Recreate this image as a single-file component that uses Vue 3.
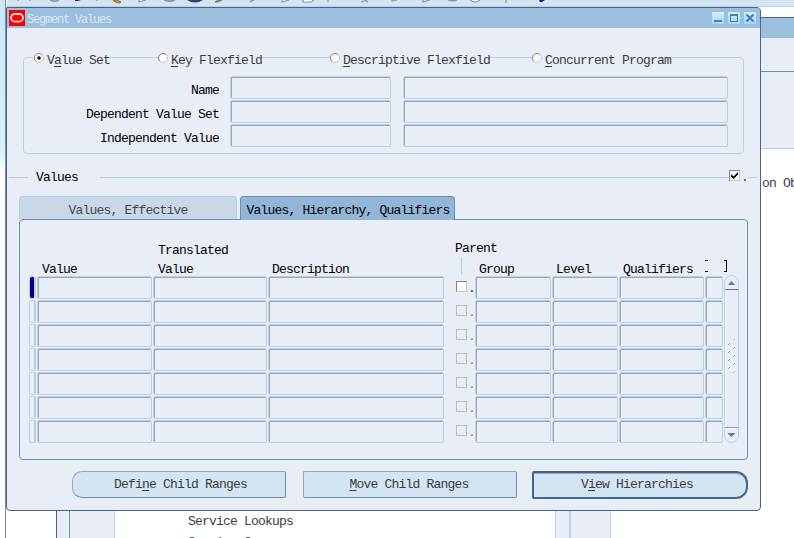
<script setup>
const scopes = [
  { pre: 'V', key: 'a', post: 'lue Set', on: true },
  { pre: '', key: 'K', post: 'ey Flexfield' },
  { pre: '', key: 'D', post: 'escriptive Flexfield' },
  { pre: '', key: 'C', post: 'oncurrent Program' },
]
const fields = ['Name', 'Dependent Value Set', 'Independent Value']
const buttons = [
  { pre: 'Defi', key: 'n', post: 'e Child Ranges', kind: 'first' },
  { pre: '', key: 'M', post: 'ove Child Ranges', kind: 'middle' },
  { pre: 'V', key: 'i', post: 'ew Hierarchies', kind: 'primary' },
]
const grips = [[8, 0], [3, 4], [8, 8], [3, 12], [8, 16], [3, 20], [8, 24], [3, 28], [8, 32]]
</script>

<template>
  <div class="desktop">
    <div class="edge"></div>
    <div class="toolbar">
      <svg width="787" height="6" viewBox="0 0 787 6">
        <g fill="none" stroke="#8d949c" stroke-width="1.2">
          <path d="M11 0v1M23 0v1M90 0v1" />
          <path d="M43 0q5 3 9 0" fill="#aaa" />
          <path d="M132 0v2l7-2" fill="#fff" />
          <path d="M157 0q6 3 11 0" fill="#999" />
          <path d="M242 0h5l-4 2M275 0v2l7-2M296 0v2h8l3-2M321 0v2" fill="#fff" />
          <path d="M354 2l6-2M361 2l-3-2M385 0v1l5-1M416 0v2l7-2" />
          <path d="M441 0q5 2 9 0" fill="#777" />
          <path d="M463 0q5 4 10 0" fill="#fff" />
          <path d="M499 0v3" />
        </g>
        <path d="M68 0h6l-3 1h-3zM532 0h6l-3 2h-2z" fill="#1c16a8" />
        <path d="M106 0l4 0 4 2-1 1-5-1z" fill="#f39a1e" stroke="#4c3a20" stroke-width=".6" />
        <path d="M180 0h16q-8 5-16 0" fill="#3a3a75" />
        <path d="M208 2l3-2h4l-4 2z" fill="#a6a448" stroke="#444" stroke-width=".6" />
      </svg>
    </div>

    <div class="back">
      <div class="back-title"></div>
      <div class="back-bar"></div>
      <div class="back-head"></div>
      <div class="back-body">
        <div class="back-rail"></div>
        <div class="back-list">
          <div>Service Lookups</div>
          <div>Service Groups</div>
        </div>
        <div class="back-rail2"></div>
        <div class="back-side">on Ob</div>
      </div>
    </div>

    <div class="win">
      <div class="title">
        <svg class="logo" width="16" height="16" viewBox="0 0 16 16">
          <rect width="16" height="16" fill="#f00" />
          <rect x="2" y="4" width="12" height="7.6" rx="3.8" fill="none" stroke="#ffdcd8" stroke-width="1.8" />
        </svg>
        <span class="caption">Segment Values</span>
        <svg class="ctl" width="44" height="12" viewBox="0 0 44 12">
          <defs>
            <linearGradient id="g" x2="0" y2="1"><stop stop-color="#d6ecfa" /><stop offset="1" stop-color="#a9d3f0" /></linearGradient>
          </defs>
          <rect width="12" height="12" fill="url(#g)" />
          <rect x="16" width="12" height="12" fill="url(#g)" />
          <rect x="32" width="12" height="12" fill="url(#g)" />
          <g stroke="#3287c4" fill="none">
            <path d="M2 9h8" stroke-width="2" />
            <rect x="18.5" y="2.5" width="7" height="7" />
            <path d="M18 3h8" stroke-width="2" />
            <path d="M34.5 2.5l7 7M41.5 2.5l-7 7" stroke-width="2" />
          </g>
        </svg>
      </div>

      <div class="group">
        <div class="scopes">
          <div v-for="s in scopes" :key="s.post" class="cell">
            <label class="scope">
              <svg width="11" height="11" viewBox="0 0 11 11">
                <circle cx="5" cy="5" r="4.5" fill="#fff" stroke="#c4c4c4" />
                <path d="M1.8 8.2A4.5 4.5 0 0 1 8.2 1.8" fill="none" stroke="#8c8c8c" />
                <circle v-if="s.on" cx="5" cy="5" r="1.8" fill="#000" />
              </svg>
              <span>{{ s.pre }}<u>{{ s.key }}</u>{{ s.post }}</span>
            </label>
          </div>
        </div>
        <div class="fields">
          <template v-for="f in fields" :key="f">
            <span class="flabel">{{ f }}</span>
            <i class="box"></i>
            <i class="box wide"></i>
          </template>
        </div>
      </div>

      <div class="section">
        <i class="rule short"></i>
        <span class="stitle">Values</span>
        <i class="rule"></i>
        <svg width="11" height="11" viewBox="0 0 11 11">
          <rect x=".5" y=".5" width="10" height="10" fill="#fff" stroke="#c4c4c4" />
          <path d="M.5 11V.5H11" fill="none" stroke="#858585" />
          <path d="M2 4l2.5 2.500L9 2v2.600L4.500 9 2 6.500z" fill="#000" />
        </svg>
        <span class="sdot">.</span>
        <i class="rule tail"></i>
      </div>

      <div class="tabs">
        <div class="tab">Values, Effective</div>
        <div class="tab active">Values, Hierarchy, Qualifiers</div>
      </div>

      <div class="panel">
        <div class="heads">
          <span></span>
          <span class="nudge">Value</span>
          <span class="nudge">Translated<br>Value</span>
          <span>Description</span>
          <span class="parent">Parent<i></i></span>
          <span>Group</span>
          <span>Level</span>
          <span>Qualifiers</span>
          <span class="flex"><b class="open"></b><b class="close"></b></span>
        </div>
        <div class="data">
          <div class="rows">
            <div v-for="n in 7" :key="n" class="row">
              <i class="mark" :class="{ current: n === 1 }"></i>
              <i class="box"></i>
              <i class="box"></i>
              <i class="box"></i>
              <span class="check" :class="{ off: n > 1 }"><i></i><b>.</b></span>
              <i class="box"></i>
              <i class="box"></i>
              <i class="box"></i>
              <i class="box"></i>
            </div>
          </div>
          <svg class="scroll" width="15" height="168" viewBox="0 0 15 168">
            <rect x=".5" y=".5" width="14" height="167" rx="7" fill="#e9eef6" stroke="#bccfe6" />
            <path d="M1.5 14V155" stroke="#fff" />
            <path d="M4 10h7L7.500 6z" fill="#6f7285" />
            <path d="M1 14.500h13" stroke="#6d7690" />
            <path d="M1 152.500h13" stroke="#8098b8" />
            <path d="M1 153.500h13" stroke="#fff" />
            <path d="M3.500 158h8L7.500 162z" fill="#6f7285" />
            <g v-for="g in grips" :key="g[1]">
              <rect :x="g[0] + 1" :y="g[1] + 63" width="2" height="2" fill="#fff" />
              <rect :x="g[0] + 2" :y="g[1] + 64" width="1" height="1" fill="#7897b8" />
              <rect :x="g[0] + 1" :y="g[1] + 65" width="1" height="1" fill="#9db5ce" />
            </g>
          </svg>
        </div>
      </div>

      <div class="actions">
        <button v-for="b in buttons" :key="b.post" :class="b.kind">
          {{ b.pre }}<u>{{ b.key }}</u>{{ b.post }}
        </button>
      </div>
    </div>
  </div>
</template>

<style>
body { margin: 0; overflow: hidden; background: #fff; }
</style>

<style scoped>
* { box-sizing: border-box; }
.desktop {
  position: relative; width: 794px; height: 538px; overflow: hidden; background: #fff;
  font: 13px/16px "Liberation Mono", monospace; letter-spacing: -0.8px; color: #3a3c42; white-space: nowrap;
}
u { text-decoration: underline; text-underline-offset: 2px; text-decoration-thickness: 1px; }
i, b { font-style: normal; font-weight: normal; }
.edge {
  position: absolute; left: 0; top: 0; width: 6px; height: 538px; border-right: 1px solid #85888e;
  background: linear-gradient(#c9e6fb 0, #d8effd 150px, #fff 172px);
}
.toolbar { position: absolute; left: 7px; top: 0; width: 787px; height: 7px; background: #d3e4f3; border-bottom: 1px solid #bccfe6; }
.toolbar svg { display: block; }

.back { position: absolute; left: 56px; top: 17px; width: 738px; height: 521px; border-left: 1px solid #456590; border-top: 1px solid #456590; background: #e9eef6; display: flex; flex-direction: column; overflow: hidden; }
.back > div, .back-body > div { flex: none; }
.back-title { height: 20px; background: #9dbfde; }
.back-bar { height: 34px; border-bottom: 1px solid #6e8eb0; }
.back-head { height: 77px; border-bottom: 1px solid #bccfe6; }
.back-body { height: 389px; display: flex; background: #fff; }
.back-rail { width: 58px; background: linear-gradient(90deg, #e9eef6 12px, #6e8eb0 12px, #6e8eb0 13px, #e9eef6 13px); border-right: 1px solid #bccfe6; }
.back-list { width: 440px; padding: 362px 0 0 73px; line-height: 21px; }
.back-list div { height: 21px; }
.back-rail2 { width: 56px; background: linear-gradient(90deg, #e9eef6 13px, #bccfe6 13px, #bccfe6 15px, #e9eef6 15px); border: solid #bccfe6; border-width: 0 1px; }
.back-side { padding: 27px 0 0 151px; }

.win { position: absolute; left: 6px; top: 7px; width: 755px; height: 504px; border: 1px solid #456590; border-radius: 1px 4px 4px 4px; background: #e9eef6; overflow: hidden; }
.title { height: 20px; padding: 2px 4px 2px 2px; display: flex; background: #9dbfde; }
.logo { display: block; }
.caption { margin: 2px 0 0 2px; font-size: 12px; letter-spacing: -1.2px; color: #d8e7f5; }
.ctl { margin: 2px 0 0 auto; }

.group { margin: 29px 16px 0; width: 721px; height: 97px; border: 1px solid #bccfe6; border-radius: 4px; }
.scopes { display: grid; grid-template-columns: 124px 172px 202px auto; margin: -5px 0 0 10px; height: 16px; }
.scope { display: inline-flex; background: #e9eef6; height: 16px; }
.scope svg { margin-right: 2px; }
.scope span { line-height: 15px; }
.fields { display: grid; grid-template-columns: 195px 161px 325px; column-gap: 12px; row-gap: 1px; grid-auto-rows: 23px; margin-top: 7px; margin-left: -1px; }
.flabel { text-align: right; color: #000; padding-top: 7px; margin-right: -1px; }
.box { display: block; border: 1px solid #bccfe6; border-radius: 2px; box-shadow: inset 1px 1px #a0a5ac; }

.section { display: flex; align-items: center; height: 16px; margin: 15px 2px 0 2px; }
.rule { height: 1px; background: #bccfe6; flex: 1; }
.section svg { margin-top: -3px; }
.rule.short { flex: none; width: 19px; }
.rule.tail { flex: none; width: 10px; }
.stitle { width: 72px; padding: 2px 0 0 8px; color: #000; }
.sdot { width: 8px; padding-left: 1px; padding-top: 2px; }

.tabs { display: flex; gap: 3px; margin: 11px 12px 0; height: 23px; }
.tab { width: 218px; height: 23px; border: 1px solid #b8cce3; border-bottom: 0; border-radius: 4px 4px 0 0; background: #cad7e8; text-align: center; line-height: 27px; color: #45484e; }
.tab.active { width: 215px; height: 24px; padding-left: 1px; border-color: #6e8eb0; background: #92b6d7; color: #000; z-index: 1; }
.panel { margin: 0 12px; width: 729px; height: 241px; border: 1px solid #6e8eb0; border-radius: 4px; padding: 21px 0 0 9px; }
.heads, .row { display: grid; grid-template-columns: 7px 115px 114px 176px 29px 76px 66px 85px 18px; column-gap: 1px; }
.heads { height: 34px; color: #000; line-height: 19px; align-items: end; }
.heads > span { padding-left: 4px; }
.heads .nudge { padding-left: 5px; }
.heads .parent { padding-left: 10px; height: 38px; line-height: 16px; }
.parent i { display: block; width: 1px; height: 18px; margin: 0 0 0 6px; background: #bccfe6; }
.heads .flex { display: flex; justify-content: space-between; padding: 0; width: 22px; height: 19px; }
.open { width: 3px; height: 12px; border: solid #000; border-width: 1px 0; }
.close { width: 3px; height: 12px; border: solid #000; border-width: 1px 1px 1px 0; }
.data { display: flex; }
.rows { width: 695px; padding-top: 1px; }
.row { height: 24px; grid-template-rows: 23px; }
.mark { border: 1px solid #bccfe6; border-right-width: 2px; border-radius: 2px; }
.mark.current { background: #00008c; border-radius: 3px; }
.check { display: flex; padding: 5px 0 0 11px; }
.check i { flex: none; width: 11px; height: 11px; border: 1px solid #c4c4c4; border-top-color: #858585; border-left-color: #858585; background: #fff; }
.check.off i { background: none; border-color: #bbb; }
.check b { flex: none; margin-left: 1px; }
.check.off b { color: #888; }
.scroll { display: block; }

.actions { display: flex; align-items: center; height: 29px; margin: 10px 12px 0 65px; }
button { padding: 0; height: 27px; width: 214px; border: 1px solid #6e8eb0; border-top-color: #a0a5ac; border-left-color: #a0a5ac; background: #d3e4f3; color: #3a3c42; font: inherit; letter-spacing: inherit; }
.first { border-radius: 10px 2px 2px 10px; padding-left: 3px; }
.middle { border-radius: 2px; margin-left: 17px; padding-right: 2px; }
.primary { width: 216px; height: 28px; margin-left: auto; padding-right: 6px; border: 2px solid #456590; border-radius: 2px 12px 12px 2px; box-shadow: inset 0 1px #a0a5ac; }
</style>
